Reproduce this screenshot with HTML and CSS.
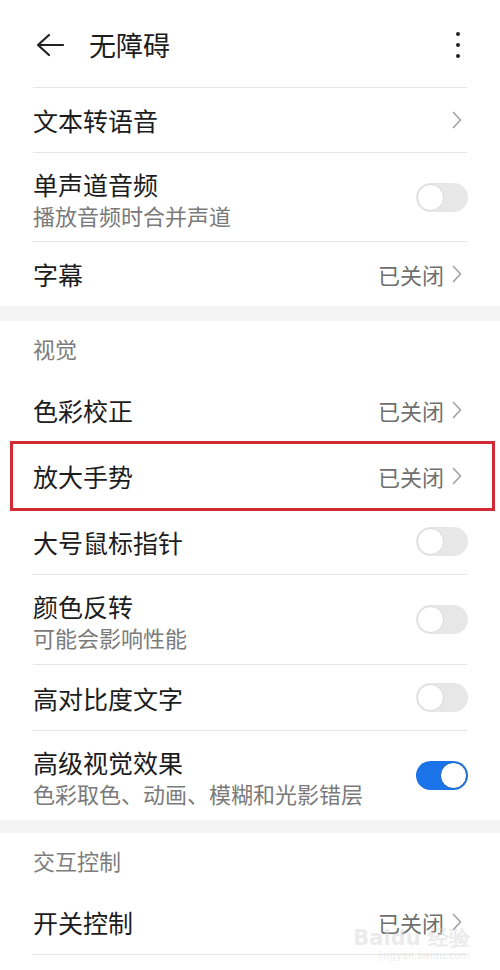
FILE: index.html
```html
<!DOCTYPE html>
<html>
<head>
<title>无障碍</title>
<meta charset="utf-8"/>
<link rel="stylesheet" href="styles.css">
</head>
<body>

<div class="group compact">
  <div class="topbar">
    <svg class="back" width="28" height="24" viewBox="0 0 28 24">
      <path d="M13 2 L2 12 L13 22 M2 12 H27" fill="none" stroke="#222" stroke-width="2.2" stroke-linejoin="round" stroke-linecap="round"/>
    </svg>
    <h1>无障碍</h1>
    <div class="more"><i></i><i></i><i></i></div>
  </div>

  <div class="item">
    <div class="text"><div class="title">文本转语音</div></div>
    <svg class="arrow" width="10" height="18" viewBox="0 0 10 18"><path d="M1.5 1.5 L8.5 9 L1.5 16.5"/></svg>
  </div>

  <div class="item tall">
    <div class="text">
      <div class="title">单声道音频</div>
      <div class="sub">播放音频时合并声道</div>
    </div>
    <span class="switch"></span>
  </div>

  <div class="item last">
    <div class="text"><div class="title">字幕</div></div>
    <span class="state">已关闭</span>
    <svg class="arrow" width="10" height="18" viewBox="0 0 10 18"><path d="M1.5 1.5 L8.5 9 L1.5 16.5"/></svg>
  </div>
</div>

<div class="gap"></div>

<div class="group">
  <div class="label">视觉</div>

  <div class="item">
    <div class="text"><div class="title">色彩校正</div></div>
    <span class="state">已关闭</span>
    <svg class="arrow" width="10" height="18" viewBox="0 0 10 18"><path d="M1.5 1.5 L8.5 9 L1.5 16.5"/></svg>
  </div>

  <div class="item marked">
    <div class="text"><div class="title">放大手势</div></div>
    <span class="state">已关闭</span>
    <svg class="arrow" width="10" height="18" viewBox="0 0 10 18"><path d="M1.5 1.5 L8.5 9 L1.5 16.5"/></svg>
  </div>

  <div class="item">
    <div class="text"><div class="title">大号鼠标指针</div></div>
    <span class="switch"></span>
  </div>

  <div class="item tall">
    <div class="text">
      <div class="title">颜色反转</div>
      <div class="sub">可能会影响性能</div>
    </div>
    <span class="switch"></span>
  </div>

  <div class="item">
    <div class="text"><div class="title">高对比度文字</div></div>
    <span class="switch"></span>
  </div>

  <div class="item tall last">
    <div class="text">
      <div class="title">高级视觉效果</div>
      <div class="sub">色彩取色、动画、模糊和光影错层</div>
    </div>
    <span class="switch on"></span>
  </div>
</div>

<div class="gap small"></div>

<div class="group">
  <div class="label">交互控制</div>

  <div class="item">
    <div class="text"><div class="title">开关控制</div></div>
    <span class="state">已关闭</span>
    <svg class="arrow" width="10" height="18" viewBox="0 0 10 18"><path d="M1.5 1.5 L8.5 9 L1.5 16.5"/></svg>
  </div>

  <div class="mark">Baidu 经验<small>jingyan.baidu.com</small></div>
</div>

</body>
</html>
```

FILE: styles.css
```css
body {
    margin: 0;
    width: 500px;
    height: 970px;
    overflow: hidden;
    background: #fff;
    font-family: "Noto Sans CJK SC", "Noto Sans", sans-serif;
    color: #1c1c1c;
}

.group { padding: 0 33px; position: relative; background: #fff; }
.gap { height: 15px; background: #f3f3f3; }
.gap.small { height: 13px; }

/* top bar */
.topbar {
    display: flex;
    align-items: center;
    height: 87px;
    border-bottom: 1px solid #e6e6e6;
}
.back { margin: 2px 0 0 3px; }
.topbar h1 {
    flex: 1;
    margin: 0 0 0 25px;
    font-size: 27px;
    font-weight: normal;
    line-height: 32px;
    padding-top: 2px;
}
.more { display: flex; flex-direction: column; gap: 7px; margin-right: 7px; padding-top: 2px; }
.more i { width: 4px; height: 4px; background: #222; border-radius: 50%; }

/* list rows */
.item {
    display: flex;
    align-items: center;
    height: 65px;
    border-bottom: 1px solid #e6e6e6;
    position: relative;
}
.item.tall { height: 89px; }
.compact .item { height: 64px; }
.compact .item.tall { height: 88px; }
.item.last { border-bottom: none; }
.text { flex: 1; }
.title { font-size: 25px; line-height: 32px; }
.sub { font-size: 22px; line-height: 30px; color: #7a7a7a; }
.tall .text { padding-top: 3px; }

.label {
    height: 56px;
    box-sizing: border-box;
    padding-top: 12px;
    font-size: 22px;
    line-height: 30px;
    color: #7d7d7d;
}

.state { font-size: 22px; color: #6f6f6f; margin-right: 8px; }
.arrow { margin-right: 5px; }
.arrow path { fill: none; stroke: #a3a3a3; stroke-width: 1.7; stroke-linecap: round; stroke-linejoin: round; }

/* switches */
.switch {
    position: relative;
    width: 52px;
    height: 29px;
    border-radius: 15px;
    background: #e7e7e7;
    margin-right: -1px;
}
.switch::after {
    content: "";
    position: absolute;
    left: 1px;
    top: 1px;
    width: 25px;
    height: 25px;
    border-radius: 50%;
    background: #fff;
    border: 1px solid #d9d9d9;
}
.switch.on { background: #1a73e8; }
.switch.on::after { left: auto; right: 1px; border-color: #1360c4; }

/* red annotation frame */
.item.marked::after {
    content: "";
    position: absolute;
    left: -23px;
    right: -28px;
    top: -2px;
    bottom: -3px;
    border: 3px solid #d22a35;
}

/* watermark */
.mark {
    position: absolute;
    right: 30px;
    top: 94px;
    font-family: "DejaVu Sans", sans-serif;
    font-size: 21px;
    font-weight: bold;
    line-height: 22px;
    color: rgba(215, 215, 215, 0.5);
    text-align: right;
}
.mark small { display: block; font-size: 10px; line-height: 14px; font-weight: normal; }
```
